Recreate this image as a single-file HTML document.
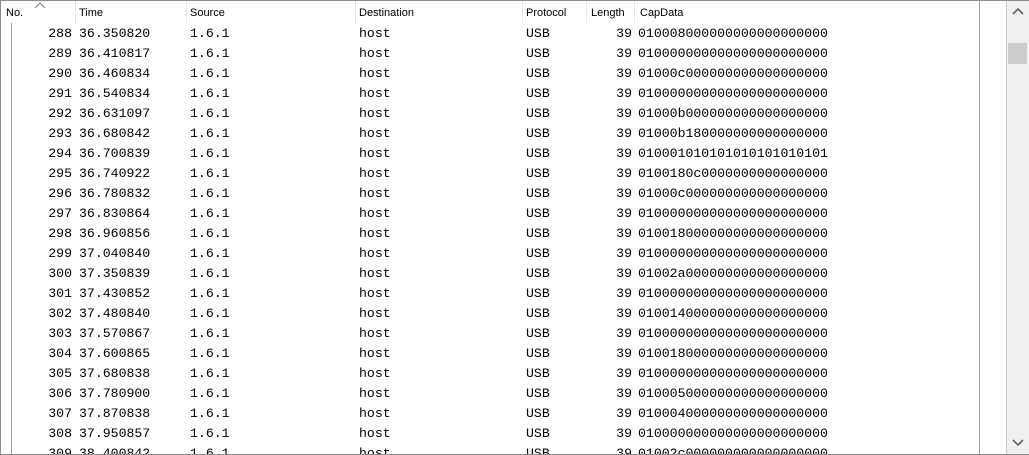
<!DOCTYPE html>
<html><head><meta charset="utf-8"><style>
body{margin:0;width:1029px;height:455px;overflow:hidden;background:#fff;position:relative;font-family:"Liberation Mono","DejaVu Sans Mono",monospace;}
.frame{position:absolute;left:0;top:0;width:1027px;height:453px;border:1px solid #8c8c8c;}
.hdr{position:absolute;left:1px;top:1px;height:22px;width:978px;background:#fff;font-family:"Liberation Sans",sans-serif;font-size:11px;color:#000;}
.hdr span{position:absolute;top:6px;}
.sep{position:absolute;top:1px;width:1px;height:22px;background:#e5e5e5;}
.vline{position:absolute;left:979px;top:1px;width:1px;height:453px;background:#a0a0a0;}
.tree{position:absolute;left:11px;top:23px;width:1px;height:431px;background:#a0a0a0;}
.row{position:absolute;left:0;height:20px;font-size:13.2px;line-height:20px;color:#000;white-space:pre;}
.row span{position:absolute;top:0;}
.sb{position:absolute;left:1006px;top:1px;width:22px;height:453px;background:#f0f0f0;border-left:1px solid #c8c8c8;}
.thumb{position:absolute;left:1008px;top:43px;width:19px;height:21px;background:#cdcdcd;}
.rows{position:absolute;left:0;top:0;width:979px;height:454px;overflow:hidden;}
</style></head><body>
<div class="frame"></div>
<div class="rows" id="rows"></div>
<div class="hdr">
<span style="left:5px">No.</span><span style="left:78px">Time</span><span style="left:189px">Source</span><span style="left:358px">Destination</span><span style="left:525px">Protocol</span><span style="left:590px">Length</span><span style="left:639px">CapData</span>
<svg style="position:absolute;left:33px;top:1px" width="12" height="7"><path d="M1 6 L6 1 L11 6" fill="none" stroke="#888" stroke-width="1"/></svg>
</div>
<div class="sep" style="left:75px"></div><div class="sep" style="left:186px"></div><div class="sep" style="left:355px"></div><div class="sep" style="left:522px"></div><div class="sep" style="left:586px"></div><div class="sep" style="left:634px"></div>
<div class="tree"></div>
<div class="vline"></div>
<div class="sb"></div>
<div class="thumb"></div>
<svg style="position:absolute;left:1012px;top:8px" width="12" height="8"><path d="M1 6 L6 1 L11 6" fill="none" stroke="#606060" stroke-width="1.6"/></svg>
<svg style="position:absolute;left:1012px;top:439px" width="12" height="8"><path d="M1 1 L6 6 L11 1" fill="none" stroke="#606060" stroke-width="1.6"/></svg>
<script>
var d=[["288","36.350820","010008000000000000000000"],["289","36.410817","010000000000000000000000"],["290","36.460834","01000c000000000000000000"],["291","36.540834","010000000000000000000000"],["292","36.631097","01000b000000000000000000"],["293","36.680842","01000b180000000000000000"],["294","36.700839","010001010101010101010101"],["295","36.740922","0100180c0000000000000000"],["296","36.780832","01000c000000000000000000"],["297","36.830864","010000000000000000000000"],["298","36.960856","010018000000000000000000"],["299","37.040840","010000000000000000000000"],["300","37.350839","01002a000000000000000000"],["301","37.430852","010000000000000000000000"],["302","37.480840","010014000000000000000000"],["303","37.570867","010000000000000000000000"],["304","37.600865","010018000000000000000000"],["305","37.680838","010000000000000000000000"],["306","37.780900","010005000000000000000000"],["307","37.870838","010004000000000000000000"],["308","37.950857","010000000000000000000000"],["309","38.400842","01002c000000000000000000"]];
var h="";
d.forEach(function(r,i){h+='<div class="row" style="top:'+(24+i*20)+'px;width:979px"><span style="right:907px">'+r[0]+'</span><span style="left:79px">'+r[1]+'</span><span style="left:190px">1.6.1</span><span style="left:359px">host</span><span style="left:526px">USB</span><span style="right:347px">39</span><span style="left:638px">'+r[2]+'</span></div>';});
document.getElementById("rows").innerHTML=h;
</script>
</body></html>
